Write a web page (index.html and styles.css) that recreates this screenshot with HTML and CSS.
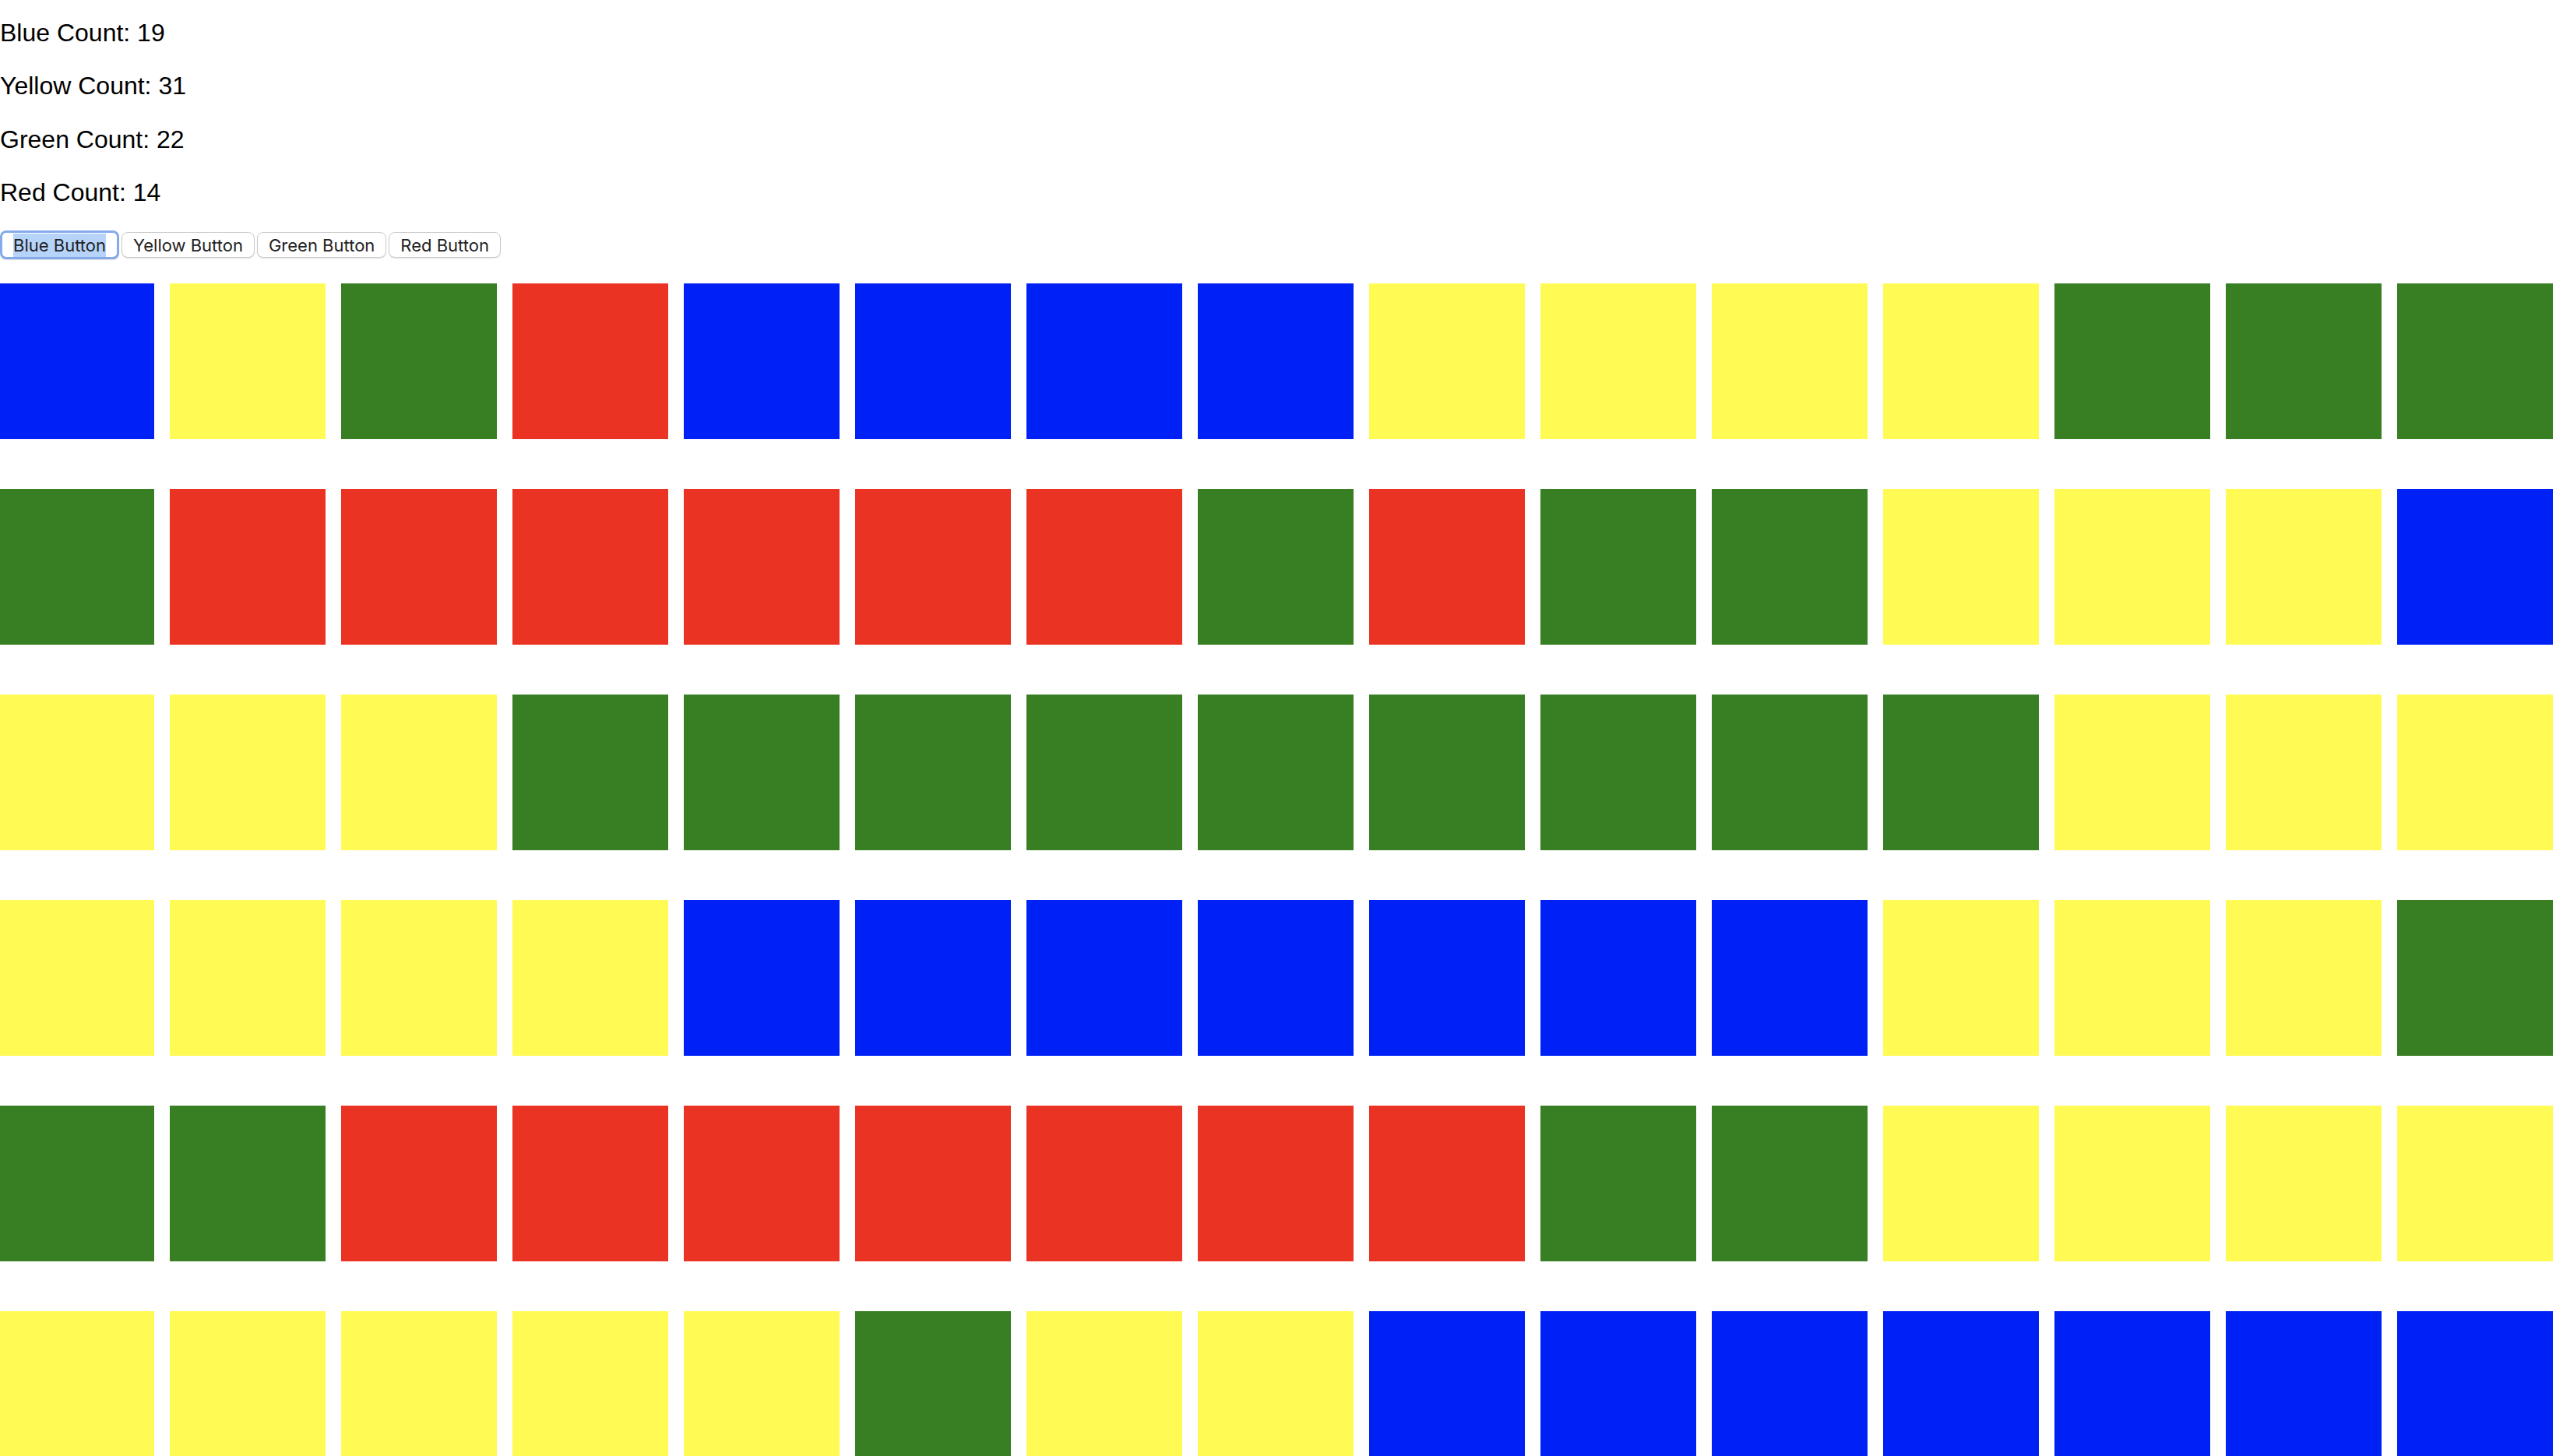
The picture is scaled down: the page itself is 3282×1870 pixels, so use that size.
FILE: index.html
```html
<!DOCTYPE html>
<html lang="en">

<head>
    <meta charset="UTF-8">
    <title>Color Squares</title>
    <link rel="stylesheet" href="styles.css">
</head>

<body>
    <div class="counts">
        <p>Blue Count: <span id="blueCount">19</span></p>
        <p>Yellow Count: <span id="yellowCount">31</span></p>
        <p>Green Count: <span id="greenCount">22</span></p>
        <p>Red Count: <span id="redCount">14</span></p>
    </div>

    <div class="buttons">
        <button class="btn active"><span class="selected">Blue Button</span></button>
        <button class="btn">Yellow Button</button>
        <button class="btn">Green Button</button>
        <button class="btn">Red Button</button>
    </div>

    <div id="grid" class="grid"></div>

    <script>
        const grid = document.getElementById('grid');
        const colors = { B: 'blue', Y: 'yellow', G: 'green', R: 'red' };
        const rows = [
            'BYGRBBBBYYYYGGG',
            'GRRRRRRGRGGYYYB',
            'YYYGGGGGGGGGYYY',
            'YYYYBBBBBBBYYYG',
            'GGRRRRRRRGGYYYY',
            'YYYYYGYYBBBBBBB'
        ];

        rows.join('').split('').forEach(c => {
            const square = document.createElement('div');
            square.className = 'square ' + colors[c];
            grid.appendChild(square);
        });
    </script>
</body>

</html>
```

FILE: styles.css
```css
body {
    margin: 0;
    background-color: #fff;
    color: #000;
    font-family: "Liberation Sans", Arial, sans-serif;
}

.counts {
    padding-top: 24px;
}

.counts p {
    margin: 0 0 32px;
    font-size: 32px;
    line-height: 1.14;
}

.buttons {
    display: flex;
    gap: 3px;
    align-items: center;
    height: 34px;
}

.btn {
    height: 33px;
    padding: 0 14px;
    background-color: #fff;
    color: #222;
    font-family: Inter, "Liberation Sans", sans-serif;
    font-size: 22px;
    border: 1px solid #cacaca;
    border-radius: 8px;
    box-shadow: 0 1px 1px rgba(0, 0, 0, 0.12);
}

.btn.active {
    height: 37px;
    padding: 0 14px;
    border: 3px solid #84aaec;
}

.selected {
    background-color: #b6d4f9;
    padding: 2px 0;
}

.grid {
    display: flex;
    flex-wrap: wrap;
    gap: 64px 20px;
    margin: 32px 0 0 -2px;
}

.square {
    width: 200px;
    height: 200px;
}

.blue {
    background-color: #0021f5;
}

.yellow {
    background-color: #fffb54;
}

.green {
    background-color: #387e22;
}

.red {
    background-color: #ea3323;
}
```
